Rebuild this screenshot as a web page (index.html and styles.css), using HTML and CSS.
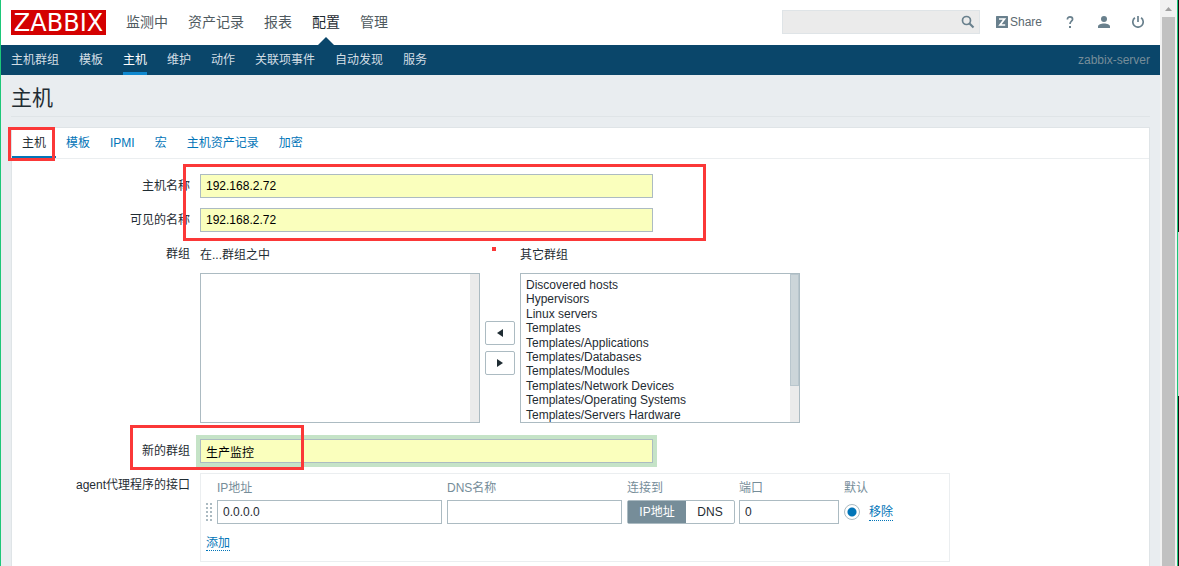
FILE: index.html
```html
<!DOCTYPE html>
<html lang="zh-CN">
<head>
<meta charset="utf-8">
<title>主机</title>
<link rel="stylesheet" href="styles.css">
</head>
<body>
<div class="page">
  <header class="top">
    <a class="logo" href="#">ZABBIX</a>
    <nav class="main-nav">
      <a href="#">监测中</a>
      <a href="#">资产记录</a>
      <a href="#">报表</a>
      <a href="#" class="selected">配置</a>
      <a href="#">管理</a>
    </nav>
    <form class="search">
      <input type="text" aria-label="搜索">
      <button type="button" aria-label="搜索">
        <svg width="14" height="14" viewBox="0 0 14 14"><circle cx="5.5" cy="5.5" r="4" fill="none" stroke="#69808d" stroke-width="1.7"/><path d="M8.500 8.500L12.500 12.500" stroke="#69808d" stroke-width="2.2"/></svg>
      </button>
    </form>
    <a class="share" href="#">
      <svg width="12" height="12" viewBox="0 0 12 12"><rect width="12" height="12" rx="0.5" fill="#69808d"/><path d="M3 3H8.500L4 9H9.200" fill="none" stroke="#fff" stroke-width="1.7"/></svg>
      <span>Share</span>
    </a>
    <a class="tool" href="#" aria-label="帮助">
      <svg width="12" height="12" viewBox="0 0 12 12"><path d="M3.400 3.400C3.400 1.700 4.400 .9 6 .9S8.600 1.800 8.600 3.300C8.600 5.200 6 5.400 6 8" fill="none" stroke="#69808d" stroke-width="1.7"/><rect x="5" y="10" width="2" height="2" fill="#69808d"/></svg>
    </a>
    <a class="tool" href="#" aria-label="用户">
      <svg width="12" height="12" viewBox="0 0 12 12"><circle cx="6" cy="3" r="3" fill="#69808d"/><path d="M0 12V10.500C0 8.500 3 7.500 6 7.500S12 8.500 12 10.500V12Z" fill="#69808d"/></svg>
    </a>
    <a class="tool" href="#" aria-label="退出">
      <svg width="12" height="12" viewBox="0 0 12 12"><path d="M2.900 1.800A5.200 5.200 0 1 0 9.100 1.800M6 0V6" fill="none" stroke="#69808d" stroke-width="1.7"/></svg>
    </a>
  </header>
  <nav class="sub-nav">
    <a href="#">主机群组</a>
    <a href="#">模板</a>
    <a href="#" class="selected">主机</a>
    <a href="#">维护</a>
    <a href="#">动作</a>
    <a href="#">关联项事件</a>
    <a href="#">自动发现</a>
    <a href="#">服务</a>
    <span class="server">zabbix-server</span>
  </nav>
  <h1 class="title">主机</h1>
  <main class="panel">
    <nav class="tabs">
      <a href="#" class="active">主机</a>
      <a href="#">模板</a>
      <a href="#">IPMI</a>
      <a href="#">宏</a>
      <a href="#">主机资产记录</a>
      <a href="#">加密</a>
    </nav>
    <form class="form">
      <label for="host">主机名称</label>
      <input id="host" class="text filled" type="text" value="192.168.2.72">
      <label for="visible">可见的名称</label>
      <input id="visible" class="text filled" type="text" value="192.168.2.72">
      <span class="form-label">群组</span>
      <div class="groups">
        <div class="group-col">
          <label for="in-groups">在...群组之中</label>
          <div class="listbox">
            <select id="in-groups" multiple></select>
            <div class="list-scroll"></div>
          </div>
        </div>
        <div class="movers">
          <button type="button" aria-label="加入"><svg width="6" height="8" viewBox="0 0 6 8"><path d="M6 0V8L0 4Z" fill="#1f2c33"/></svg></button>
          <button type="button" aria-label="移出"><svg width="6" height="8" viewBox="0 0 6 8"><path d="M0 0V8L6 4Z" fill="#1f2c33"/></svg></button>
        </div>
        <div class="group-col">
          <label for="other-groups">其它群组</label>
          <div class="listbox">
            <select id="other-groups" multiple>
              <option>Discovered hosts</option>
              <option>Hypervisors</option>
              <option>Linux servers</option>
              <option>Templates</option>
              <option>Templates/Applications</option>
              <option>Templates/Databases</option>
              <option>Templates/Modules</option>
              <option>Templates/Network Devices</option>
              <option>Templates/Operating Systems</option>
              <option>Templates/Servers Hardware</option>
            </select>
            <div class="list-scroll"><div class="list-thumb"></div></div>
          </div>
        </div>
      </div>
      <label for="new-group">新的群组</label>
      <input id="new-group" class="text filled focused" type="text" value="生产监控">
      <span class="form-label">agent代理程序的接口</span>
      <div class="interfaces">
        <table>
          <thead>
            <tr><th class="c-drag"></th><th class="c-ip">IP地址</th><th class="c-dns">DNS名称</th><th class="c-use">连接到</th><th class="c-port">端口</th><th class="c-def">默认</th><th></th></tr>
          </thead>
          <tbody>
            <tr>
              <td>
                <svg width="6" height="18" viewBox="0 0 6 18"><path d="M1 0V18M5 0V18" stroke="#acbbc2" stroke-width="2" stroke-dasharray="2 2"/></svg>
              </td>
              <td><input class="text" type="text" aria-label="IP地址" value="0.0.0.0"></td>
              <td><input class="text" type="text" aria-label="DNS名称"></td>
              <td>
                <div class="segmented">
                  <label><input type="radio" name="use" checked>IP地址</label>
                  <label><input type="radio" name="use">DNS</label>
                </div>
              </td>
              <td><input class="text" type="text" aria-label="端口" value="0"></td>
              <td><input class="radio" type="radio" name="default" aria-label="默认" checked></td>
              <td><a class="action" href="#">移除</a></td>
            </tr>
          </tbody>
        </table>
        <div class="add"><a class="action" href="#">添加</a></div>
      </div>
    </form>
  </main>
  <div class="mark mark-tab"></div>
  <div class="mark mark-names"></div>
  <div class="mark mark-group"></div>
  <div class="mark mark-dot"></div>
</div>
<div class="scrollbar">
  <svg width="17" height="17" viewBox="0 0 17 17"><path d="M5 11L8.500 7L12 11Z" fill="#a0a0a0"/></svg>
  <div class="thumb"></div>
</div>
<div class="edge"></div>
</body>
</html>
```

FILE: styles.css
```css
* {
  box-sizing: border-box;
}

body {
  margin: 0;
  display: flex;
  height: 100vh;
  overflow: hidden;
  border-left: 1px solid #1dc779;
  background: #e9edf0;
  color: #1f2c33;
  font-family: "Liberation Sans", "Noto Sans CJK SC", sans-serif;
  font-size: 12px;
}

a {
  color: #0275b8;
  text-decoration: none;
}

svg {
  display: block;
}

input,
select,
button {
  font: inherit;
  color: inherit;
}

.page {
  position: relative;
  flex: 1;
  min-width: 0;
  display: flex;
  flex-direction: column;
}

.top {
  display: flex;
  align-items: center;
  height: 45px;
  padding: 0 16px 1px 10px;
  background: #fff;
}

.logo {
  width: 95px;
  height: 25px;
  background: #d40000;
  color: #fff;
  font: 24px/27px "DejaVu Sans", sans-serif;
  text-align: center;
}

.main-nav {
  display: flex;
  flex: 1;
  align-self: flex-start;
  gap: 20px;
  padding-left: 20px;
  font-size: 14px;
  line-height: 45px;
}

.main-nav a {
  color: #4f5a60;
}

.main-nav .selected {
  position: relative;
  color: #1f2c33;
}

.main-nav .selected::after {
  content: "";
  position: absolute;
  left: 50%;
  bottom: 0;
  margin-left: -8px;
  border: 8px solid transparent;
  border-top: 0;
  border-bottom-color: #0a466a;
}

.search {
  display: flex;
  align-items: center;
  width: 198px;
  height: 24px;
  margin-right: 16px;
  border: 1px solid #dfe4e7;
  background: #ebebeb;
}

.search input {
  flex: 1;
  min-width: 0;
  border: 0;
  background: none;
}

.search button {
  padding: 0 4px;
  border: 0;
  background: none;
}

.share {
  display: flex;
  align-items: center;
  gap: 2px;
  margin-right: 22px;
  color: #69808d;
}

.share span {
  color: #5c6970;
}

.tool + .tool {
  margin-left: 22px;
}

.sub-nav {
  display: flex;
  gap: 20px;
  height: 30px;
  padding: 0 10px;
  background: #0a466a;
  line-height: 30px;
}

.sub-nav a {
  color: #d3dee5;
}

.sub-nav .selected {
  border-bottom: 3px solid #0f88cf;
  color: #fff;
}

.server {
  margin-left: auto;
  color: #768d99;
}

.title {
  margin: 0 10px 10px;
  height: 42px;
  border-bottom: 1px solid #dfe4e7;
  font-size: 21px;
  font-weight: 400;
  line-height: 46px;
}

.panel {
  flex: 1;
  margin: 0 10px;
  border: 1px solid #dfe4e7;
  border-bottom: 0;
  background: #fff;
}

.tabs {
  display: flex;
  height: 31px;
  border-bottom: 1px solid #ebeef0;
  line-height: 30px;
}

.tabs a {
  padding: 0 10px;
}

.tabs .active {
  border-bottom: 2px solid #0275b8;
  color: #1f2c33;
}

.form {
  display: grid;
  grid-template-columns: 178px minmax(0, 1fr);
  gap: 10px;
  padding-top: 15px;
}

.form > label,
.form-label {
  text-align: right;
  line-height: 24px;
}

.text {
  display: block;
  width: 100%;
  height: 24px;
  padding: 0 5px;
  border: 1px solid #acbbc2;
  border-radius: 0;
  background: #fff;
}

.form > .text {
  max-width: 453px;
}

.filled {
  background: #faffbd;
  color: #000;
}

.focused {
  outline: 0;
  box-shadow: 0 0 0 4px #c5e3c7;
}

.groups {
  display: flex;
  align-items: flex-end;
  gap: 5px;
  padding-bottom: 6px;
}

.group-col {
  width: 280px;
}

.group-col label {
  display: block;
  margin-bottom: 5px;
  line-height: 26px;
}

.listbox {
  display: flex;
  height: 150px;
  border: 1px solid #acbbc2;
}

.listbox select {
  flex: 1;
  min-width: 0;
  padding: 4px 3px 0;
  border: 0;
  border-radius: 0;
  background: #fff;
  overflow: hidden;
  outline: 0;
}

.listbox option {
  padding: 0 2px;
  line-height: 1.2;
}

.list-scroll {
  width: 9px;
  background: #ebebeb;
}

.list-thumb {
  height: 112px;
  border: 1px solid #b9c6cd;
  background: #ccd5d9;
}

.movers {
  display: flex;
  flex-direction: column;
  justify-content: center;
  gap: 6px;
  height: 150px;
}

.movers button {
  display: flex;
  align-items: center;
  justify-content: center;
  width: 30px;
  height: 24px;
  padding: 0;
  border: 1px solid #acbbc2;
  border-radius: 2px;
  background: #fff;
}

.interfaces {
  max-width: 750px;
  padding-left: 5px;
  border: 1px solid #ebeef0;
}

.interfaces table {
  table-layout: fixed;
  width: 100%;
  border-collapse: collapse;
}

.interfaces th {
  height: 26px;
  padding: 0 0 2px;
  color: #768d99;
  font-weight: 400;
  text-align: left;
}

.interfaces td {
  height: 24px;
  padding: 0 5px 0 0;
}

.interfaces .c-drag {
  width: 11px;
}

.interfaces .c-ip {
  width: 230px;
}

.interfaces .c-dns {
  width: 180px;
}

.interfaces .c-use {
  width: 112px;
}

.interfaces .c-port {
  width: 105px;
}

.interfaces .c-def {
  width: 25px;
}

.segmented {
  display: flex;
  width: 108px;
  height: 24px;
  border: 1px solid #acbbc2;
  border-radius: 2px;
  line-height: 22px;
}

.segmented label {
  flex: 1 0 auto;
  padding: 0 11px;
  text-align: center;
}

.segmented label:has(:checked) {
  background: #768d99;
  color: #fff;
}

.segmented input {
  appearance: none;
  display: block;
  width: 0;
  height: 0;
  margin: 0;
}

.radio {
  appearance: none;
  display: block;
  width: 16px;
  height: 16px;
  margin: 0;
  border: 1px solid #acbbc2;
  border-radius: 50%;
  background: radial-gradient(circle, #0275b8 4px, #fff 5px);
}

.action {
  border-bottom: 1px dotted #0275b8;
}

.interfaces td .action {
  display: inline-block;
  line-height: 16px;
}

.add {
  height: 37px;
  line-height: 38px;
}

.mark {
  position: absolute;
  border: 3px solid #fb3838;
}

.mark-tab {
  left: 7px;
  top: 127px;
  width: 47px;
  height: 34px;
}

.mark-names {
  left: 182px;
  top: 164px;
  width: 523px;
  height: 77px;
}

.mark-group {
  left: 129px;
  top: 425px;
  width: 174px;
  height: 45px;
}

.mark-dot {
  left: 491px;
  top: 247px;
  border-width: 2px;
}

.scrollbar {
  display: flex;
  flex-direction: column;
  width: 17px;
  background: #f1f1f1;
}

.thumb {
  flex: 1;
  margin: 0 2px;
  background: #c1c1c1;
}

.edge {
  width: 2px;
  border-left: 1px solid #1dc779;
  background: linear-gradient(#111 41%, #d8d8d8 0 70%, #111 0);
}
```
